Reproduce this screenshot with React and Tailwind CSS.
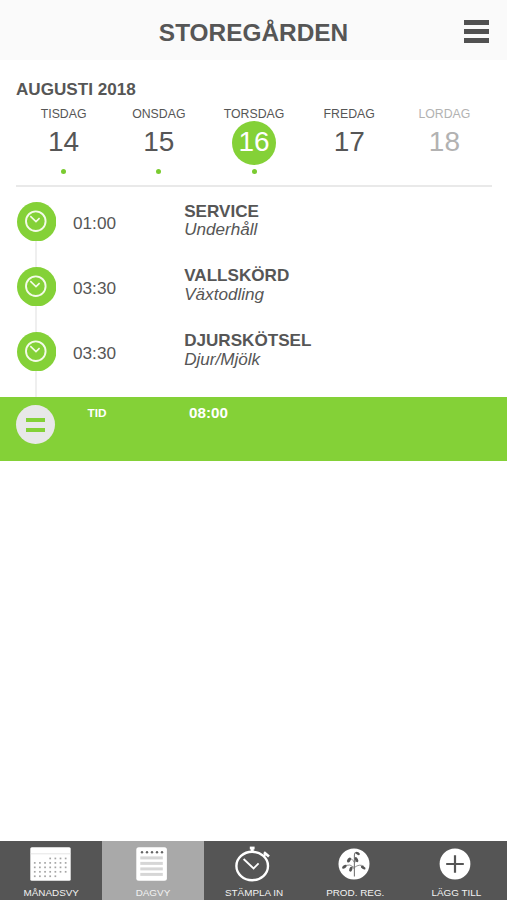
const DAYS = [
  { name: "TISDAG", date: 14, dot: true },
  { name: "ONSDAG", date: 15, dot: true },
  { name: "TORSDAG", date: 16, dot: true, active: true },
  { name: "FREDAG", date: 17 },
  { name: "LORDAG", date: 18, muted: true },
];

const ENTRIES = [
  { time: "01:00", title: "SERVICE", type: "Underhåll" },
  { time: "03:30", title: "VALLSKÖRD", type: "Växtodling" },
  { time: "03:30", title: "DJURSKÖTSEL", type: "Djur/Mjölk" },
];

const ClockIcon = () => (
  <svg viewBox="0 0 39.4 39.4" className="block size-[39.4px]" fill="none" stroke="#f4fbe9" strokeWidth="1.9">
    <circle cx="19.7" cy="19.7" r="19.7" fill="#84d137" stroke="none" />
    <circle cx="18.8" cy="19.2" r="9.8" />
    <path d="M13.3 14.2 19 19.6 22.6 16.2" strokeWidth="1.6" />
  </svg>
);

// the first calendar week starts on a thursday, the last one ends on a friday
const WEEKS = [
  [3, 7],
  [0, 7],
  [0, 7],
  [0, 7],
  [0, 5],
];

const CalendarIcon = () => (
  <svg viewBox="0 0 41 34" className="block h-[34px] w-[41px]">
    <rect x="0.3" y="0.3" width="40.4" height="33.4" rx="1.5" fill="#fff" />
    <path d="M0.5 6.8H40.5" stroke="#dedede" strokeWidth="0.8" />
    {WEEKS.map(([from, to], row) =>
      Array.from({ length: to - from }, (_, i) => (
        <rect key={`${row}-${i}`} x={3.9 + (from + i) * 5.15} y={10.6 + row * 4.45} width="1.7" height="1.7" fill="#a5a5a5" />
      ))
    )}
  </svg>
);

const NotepadIcon = () => (
  <svg viewBox="0 0 31 34" className="block h-[34px] w-[31px]">
    <rect x="0.3" y="0.3" width="30.6" height="33.4" rx="2.5" fill="#fff" />
    {[6, 11, 16, 21, 26].map((x) => (
      <circle key={x} cx={x} cy="5.2" r="1.2" fill="#666" />
    ))}
    {[9.4, 14.9, 20.4, 25.9].map((y) => (
      <rect key={y} x="4.3" y={y} width="22.5" height="3" fill="#d6d6d6" />
    ))}
  </svg>
);

const StopwatchIcon = () => (
  <svg viewBox="0 0 36 36" className="block size-[36px]" fill="none" stroke="#fff">
    <ellipse cx="17.2" cy="20" rx="15.8" ry="14.2" strokeWidth="2.4" />
    <path d="M14.8 2H19.6" strokeWidth="2.8" />
    <path d="M17.2 2V6" strokeWidth="3" />
    <path d="M29 6.2 34 10.4" strokeWidth="2.6" />
    <path d="M28.2 10.4 30.8 8" strokeWidth="2" />
    <path d="M8.6 13 18.6 22.4 23.6 17.4" strokeWidth="1.8" />
  </svg>
);

const PlantIcon = () => (
  <svg viewBox="0 0 32 32" className="block size-[32px]">
    <circle cx="16" cy="16" r="15.5" fill="#fff" />
    <g fill="none" stroke="#777" strokeWidth="0.8">
      <path d="M16.4 28.5V7Q16.6 3.8 19 4.6" strokeWidth="1.1" />
      <path d="M16.4 19.5Q12 15.5 7.2 17.5M16.4 19.5Q21.5 15.5 26 18.4M16.4 14.5Q13.5 9.5 11.6 11M16.4 15Q18 11.5 19.5 11.5M16.4 20.5Q13 18.5 12.4 20" />
    </g>
    <g fill="#555">
      <ellipse cx="19.7" cy="5.4" rx="2.4" ry="1.3" transform="rotate(30 19.7 5.4)" />
      <ellipse cx="11" cy="12" rx="1.6" ry="2.7" transform="rotate(35 11 12)" />
      <ellipse cx="18.5" cy="11.6" rx="1.5" ry="2.8" transform="rotate(-28 18.5 11.6)" />
      <ellipse cx="6.4" cy="18.8" rx="1.5" ry="2.6" transform="rotate(55 6.4 18.8)" />
      <ellipse cx="12.8" cy="21.2" rx="1.5" ry="2.5" transform="rotate(20 12.8 21.2)" />
      <ellipse cx="25.2" cy="19.6" rx="1.4" ry="2.6" transform="rotate(-60 25.2 19.6)" />
    </g>
  </svg>
);

const PlusIcon = () => (
  <svg viewBox="0 0 32 32" className="block size-[32px]">
    <circle cx="16" cy="16" r="15.4" fill="#fff" />
    <path d="M7.2 16H24.8M16 7.2V24.8" stroke="#555" strokeWidth="2.2" />
  </svg>
);

const TABS = [
  { label: "MÅNADSVY", icon: CalendarIcon, iconClass: "-ml-[2px]" },
  { label: "DAGVY", icon: NotepadIcon, iconClass: "-ml-[2px]", active: true },
  { label: "STÄMPLA IN", icon: StopwatchIcon, iconClass: "-ml-[2px]" },
  { label: "PROD. REG.", icon: PlantIcon, iconClass: "-ml-[3px]" },
  { label: "LÄGG TILL", icon: PlusIcon, iconClass: "-ml-[3px]" },
];

function Header() {
  return (
    <header className="relative flex h-[60px] items-center justify-center bg-[#fafafa] pt-[6px]">
      <h1 className="text-[24.4px] font-bold leading-none">STOREGÅRDEN</h1>
      <button className="absolute right-[18px] top-[20px] flex flex-col gap-[4px]" aria-label="Meny">
        <span className="h-[5px] w-[25px] bg-[#515151]" />
        <span className="h-[5px] w-[25px] bg-[#515151]" />
        <span className="h-[5px] w-[25px] bg-[#515151]" />
      </button>
    </header>
  );
}

function Day({ name, date, dot, active, muted }) {
  return (
    <div className={`flex flex-1 flex-col items-center ${muted ? "text-[#b2b2b2]" : ""}`}>
      <span className="text-[12.3px] leading-[14px]">{name}</span>
      <span
        className={`-mt-[0.5px] flex size-[44px] items-center justify-center rounded-full pb-[2px] text-[28px] leading-none
          ${active ? "bg-[#84d137] text-white" : ""}`}
      >
        {date}
      </span>
      {dot && <span className="mt-[4.5px] size-[5px] rounded-full bg-[#7acb30]" />}
    </div>
  );
}

export default function App() {
  return (
    <div className="flex h-[900px] w-[507px] flex-col overflow-hidden bg-white font-['Liberation_Sans',Arial,sans-serif] text-[#565656]">
      <Header />

      <section className="ml-[16px] mr-[15px] h-[126.5px] border-b-2 border-[#e9e9e9] pt-[20px]">
        <h2 className="text-[17.1px] font-bold leading-[19px]">AUGUSTI 2018</h2>
        <div className="mt-[8px] flex">
          {DAYS.map((d) => (
            <Day key={d.date} {...d} />
          ))}
        </div>
      </section>

      {/* Time entries, joined by a thin line */}
      <ul className="flex h-[210.5px] flex-col pt-[15.5px]">
        {ENTRIES.map((e) => (
          <li key={e.title} className="relative flex h-[64.8px] shrink-0 pl-[16.8px]">
            <span className="absolute left-[35px] top-[39px] h-[26px] w-[1.5px] bg-[#efefef]" />
            <ClockIcon />
            <span className="ml-[16.8px] w-[111.2px] pt-[12px] text-[17.2px] leading-[19px]">{e.time}</span>
            <div className="pt-[0.6px]">
              <div className="text-[17.1px] font-bold leading-[18.5px]">{e.title}</div>
              <div className="text-[17.1px] italic leading-[18.5px]">{e.type}</div>
            </div>
          </li>
        ))}
      </ul>

      {/* Day total */}
      <div className="flex h-[64px] shrink-0 bg-[#84d137] pl-[15.6px] pt-[8px] font-bold text-white">
        <div className="flex size-[39.4px] flex-col items-center justify-center gap-[6px] rounded-full bg-[#e8e8e8]">
          <span className="h-[4px] w-[18.5px] bg-[#84d137]" />
          <span className="h-[4px] w-[18.5px] bg-[#84d137]" />
        </div>
        <span className="ml-[32.5px] w-[101.5px] text-[11.8px] leading-[17px]">TID</span>
        <span className="text-[15.2px] leading-[16px]">08:00</span>
      </div>

      <nav className="mt-auto flex h-[59px] bg-[#555]">
        {TABS.map(({ label, icon: Icon, iconClass, active }) => (
          <button
            key={label}
            className={`flex w-[101.2px] flex-col items-center text-[#f2f2f2] first:w-[102.4px] ${active ? "bg-[#a9a9a9]" : ""}`}
          >
            <span className={`flex h-[46px] items-center ${iconClass}`}>
              <Icon />
            </span>
            <span className="text-[9.9px] leading-[11px]">{label}</span>
          </button>
        ))}
      </nav>
    </div>
  );
}
